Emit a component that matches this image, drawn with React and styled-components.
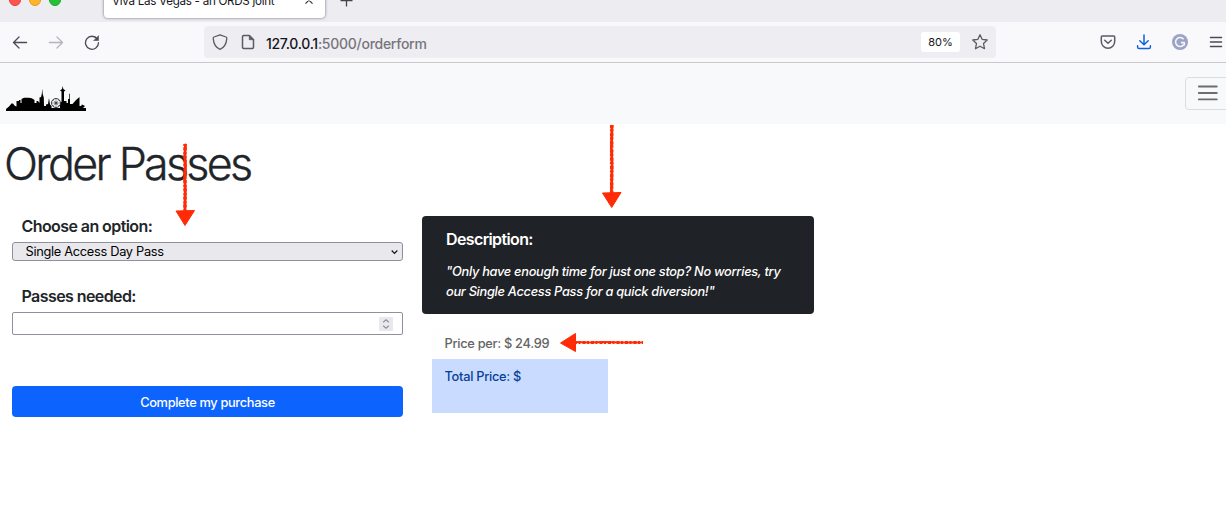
import React from 'react';
import styled, { createGlobalStyle } from 'styled-components';

const GlobalStyle = createGlobalStyle`
  *, *::before, *::after { box-sizing: border-box; }
  html, body { margin: 0; overflow: hidden; background: #fff; }
  body, button { font-family: Inter, "Liberation Sans", sans-serif; font-weight: 450; }
  svg { display: block; flex: none; }
`;

const Screen = styled.div`
  position: relative;
  width: 1226px;
  height: 522px;
  overflow: hidden;
  color: #212529;
`;

const TabStrip = styled.div`
  height: 22px;
  display: flex;
  align-items: flex-start;
  background: #edecf1;
`;
const TrafficLights = styled.div`
  display: flex;
  gap: 8px;
  width: 104px;
  padding-left: 9px;
  margin-top: -6px;
`;
const Light = styled.span`
  width: 12px;
  height: 12px;
  border-radius: 50%;
  background: ${(p) => p.$fill};
  border: 0.5px solid ${(p) => p.$edge};
`;
const Tab = styled.div`
  display: flex;
  justify-content: space-between;
  width: 221px;
  height: 30px;
  margin-top: -12px;
  padding: 4px 11px 0 8px;
  border-radius: 4px;
  background: #fff;
  box-shadow: 0 0 3px rgba(60, 58, 85, 0.75);
`;
const TabTitle = styled.span`
  font-size: 11.6px;
  font-weight: 400;
  line-height: 19px;
  letter-spacing: -0.27px;
  color: #15141a;
  white-space: nowrap;
`;

const Toolbar = styled.div`
  height: 41px;
  display: flex;
  align-items: center;
  background: #f9f9fb;
  border-bottom: 1px solid #c9c9cc;
`;
const NavButtons = styled.div`
  display: flex;
  gap: 20px;
  width: 204px;
  padding-left: 12px;
`;
const AddressBar = styled.div`
  display: flex;
  align-items: center;
  width: 792px;
  height: 32px;
  padding: 0 8px 0 8px;
  border-radius: 4px;
  background: #eeedf2;
`;
const AddressIcons = styled.div`
  display: flex;
  gap: 12px;
`;
const Url = styled.span`
  flex: 1;
  margin-left: 10px;
  padding-top: 3px;
  font-size: 14px;
  line-height: 20px;
  letter-spacing: -0.27px;
  color: #76757c;
`;
const Host = styled.span`
  color: #15141a;
  letter-spacing: -0.3px;
`;
const ZoomBadge = styled.span`
  width: 39px;
  height: 20px;
  margin-right: 12px;
  border-radius: 3px;
  background: #fff;
  font-size: 11px;
  font-weight: 400;
  line-height: 20px;
  text-align: center;
  color: #15141a;
`;
const Extensions = styled.div`
  display: flex;
  gap: 20px;
  margin-left: 104px;
`;

const Navbar = styled.nav`
  height: 61px;
  display: flex;
  align-items: center;
  justify-content: space-between;
  padding-left: 6px;
  background: #f8f9fa;
`;
const Brand = styled.div`
  padding-top: 10px;
`;
const MenuToggle = styled.button`
  display: flex;
  align-items: center;
  width: 46px;
  height: 33px;
  margin: 0 -5px 0 0;
  padding: 0 0 1px 10px;
  border: 1px solid #dcdddf;
  border-radius: 4px;
  background: transparent;
`;

const Title = styled.h1`
  margin: 16px 0 0 4px;
  font-size: 44.8px;
  line-height: 49px;
  font-weight: 300;
  -webkit-text-stroke: 0.35px #212529;
  letter-spacing: -2.72px;
`;
const Columns = styled.main`
  display: flex;
  gap: 19px;
  padding: 27px 12px 0;
`;
const OrderForm = styled.div`
  display: flex;
  flex-direction: column;
  width: 391px;
`;
const Label = styled.label`
  margin-left: 9.5px;
  font-size: 16px;
  line-height: 20px;
  font-weight: 600;
  letter-spacing: -0.58px;
`;
const SelectBox = styled.div`
  display: flex;
  align-items: center;
  justify-content: space-between;
  height: 19px;
  margin: 6px 0 25px;
  padding: 0 4px 0 12.5px;
  border: 1px solid #8f8f9d;
  border-radius: 3px;
  background: #e9e9ed;
  font-size: 12.8px;
  font-weight: 400;
  line-height: 17px;
  letter-spacing: -0.3px;
  color: #000;
`;
const NumberBox = styled.div`
  display: flex;
  align-items: center;
  justify-content: flex-end;
  height: 23px;
  margin: 6px 0 51px;
  padding-right: 9px;
  border: 1px solid #8f8f9d;
  border-radius: 2px;
  background: #fff;
`;
const Spinner = styled.span`
  display: flex;
  align-items: center;
  justify-content: center;
  width: 14px;
  height: 14px;
  background: #e9e9ed;
`;
const SubmitButton = styled.button`
  height: 31px;
  padding: 2px 0 0;
  border: 0;
  border-radius: 4px;
  background: #0d63fd;
  font-size: 12.8px;
  line-height: 20px;
  letter-spacing: -0.33px;
  color: #fff;
`;

const Details = styled.div`
  width: 392px;
`;
const DescriptionCard = styled.section`
  height: 98px;
  padding: 13px 24px 0;
  border-radius: 4px;
  background: #1f2226;
  color: #fff;
`;
const CardTitle = styled.h2`
  margin: 0 0 13px;
  font-size: 16px;
  line-height: 20px;
  font-weight: 600;
  letter-spacing: -0.62px;
`;
const CardText = styled.p`
  margin: 0;
  font-size: 12.8px;
  font-weight: 500;
  line-height: 20px;
  font-style: italic;
  white-space: nowrap;
  letter-spacing: -0.29px;
`;
const PriceList = styled.div`
  width: 176px;
  margin: 13px 0 0 10px;
`;
const PriceRow = styled.div`
  height: ${(p) => (p.$total ? 54 : 32)}px;
  padding: ${(p) => (p.$total ? 8 : 7)}px 12.5px 0;
  background: ${(p) => (p.$total ? '#c9dcff' : '#fefefe')};
  color: ${(p) => (p.$total ? '#083f98' : '#636464')};
  font-size: 12.8px;
  line-height: 20px;
  letter-spacing: -0.28px;
  white-space: nowrap;
`;
const Annotations = styled.svg`
  position: absolute;
  inset: 0;
  pointer-events: none;
`;

const Icon = ({ size = 16, color = '#5b5b66', width = 1.3, children }) => (
  <svg width={size} height={size} viewBox="0 0 16 16" fill="none" stroke={color}
    strokeWidth={width} strokeLinecap="round" strokeLinejoin="round">
    {children}
  </svg>
);

const Skyline = () => (
  <svg width="80" height="26" viewBox="0 0 80 26">
    <path d="M0 25V23L3 20.500L5.500 17.500L7 17.500L9 20L10.500 20.500V15H13V14H14.500V17H15.500V13L18 11.800H22L25 12L27 13L28.500 14V17H30.500V15L32 15L33.500 17V11.500L35 11L35.800 8L36.200 2.500L36.700 8L37.800 11.500L38 20H40V18.500L42 18L43 12L44 18.500L45.500 20V22H54V16.500L55.500 16V5.500L54 4.500L56 3L56.700 0L57.300 3L59.500 4.500L58 5.500V15H60.500V17H62V13H63.300V8L64 7.500V18H66.500L70 14L73.500 11V20H75L76 18.500L79 20L77 22H80V25Z" fill="#000" />
    <circle cx="50" cy="17" r="4.500" fill="#f8f9fa" stroke="#222" strokeWidth="0.900" />
    <circle cx="50" cy="17" r="1.500" fill="#333" />
    <path d="M50 12.500V21.500M45.500 17H54.500M46.800 13.800L53.200 20.200M53.200 13.800L46.800 20.200" stroke="#555" strokeWidth="0.500" />
  </svg>
);

const Arrows = () => (
  <Annotations width="1226" height="522" viewBox="0 0 1226 522" fill="#ff2b06" stroke="#ff2b06">
    <path d="M185.500 145L184.800 156L185.500 166L184.800 178L185.300 190L184.900 210" fill="none" strokeWidth="2.800" strokeLinecap="round" />
    <path d="M185 144V212" fill="none" strokeWidth="3.400" strokeDasharray="2 1.200 3 2" />
    <path d="M176 211L194.500 210.500L185 225.500Z" strokeWidth="1" strokeLinejoin="round" />
    <path d="M612 125L611.400 148L612 165L611.400 193" fill="none" strokeWidth="2.800" />
    <path d="M611.700 125V194" fill="none" strokeWidth="3.500" strokeDasharray="3 1.200 2 2" />
    <path d="M602.500 193L621 192.500L611.700 207.500Z" strokeWidth="1" strokeLinejoin="round" />
    <path d="M574 342L590 342.600L605 342L620 342.600L643 342.400" fill="none" strokeWidth="2" />
    <path d="M574 342.400H643" fill="none" strokeWidth="3" strokeDasharray="3 1.500 2 2" />
    <path d="M560.500 343L575.500 333.500V351.500Z" strokeWidth="1" strokeLinejoin="round" />
  </Annotations>
);

export default function App() {
  return (
    <Screen>
      <GlobalStyle />
      <TabStrip>
        <TrafficLights>
          <Light $fill="#ff5450" $edge="#e8403c" />
          <Light $fill="#ffb429" $edge="#e39c1c" />
          <Light $fill="#24c138" $edge="#18a82a" />
        </TrafficLights>
        <Tab>
          <TabTitle>Viva Las Vegas - an ORDS joint</TabTitle>
          <svg width="10" height="18" viewBox="0 0 10 18" fill="none" stroke="#33323a" strokeWidth="1.200">
            <path d="M1.500 4.500L8.500 11.700M8.500 4.500L1.500 11.700" />
          </svg>
        </Tab>
        <svg width="40" height="12" viewBox="0 0 40 12" fill="none" stroke="#45444e" strokeWidth="1.300">
          <path d="M15.500 0.600H27.500M21.500 -5V6.500" />
        </svg>
      </TabStrip>

      <Toolbar>
        <NavButtons>
          <Icon color="#4c4b55"><path d="M14.600 8.500H1.500M7 3L1.500 8.500L7 14" /></Icon>
          <Icon color="#b5b4bb"><path d="M1.400 8.500H14.500M9 3L14.500 8.500L9 14" /></Icon>
          <Icon color="#4c4b55">
            <path d="M13.300 5A6.500 6.500 0 1 0 14.500 8.700" />
            <path d="M14.500 2V6.500H10Z" fill="#4c4b55" strokeWidth="0.600" />
          </Icon>
        </NavButtons>
        <AddressBar>
          <AddressIcons>
            <Icon><path d="M8 0.800L14 3C14.700 3.300 14.900 3.700 14.800 4.400C14.400 9.500 12.800 13.500 8 15.300C3.200 13.500 1.600 9.500 1.200 4.400C1.100 3.700 1.300 3.300 2 3Z" /></Icon>
            <Icon width={1.500}>
              <path d="M3.700 1.500H9.300L13.500 5.700V13.300Q13.500 14.500 12.300 14.500H3.700Q2.500 14.500 2.500 13.300V2.700Q2.500 1.500 3.700 1.500Z" />
              <path d="M9.300 1.500V5.700H13.500Z" fill="#5b5b66" strokeWidth="0.800" />
            </Icon>
          </AddressIcons>
          <Url><Host>127.0.0.1</Host>:5000/orderform</Url>
          <ZoomBadge>80%</ZoomBadge>
          <Icon><path d="M8 0.800L10.100 5.300L15.200 6L11.500 9.500L12.500 14.700L8 12.200L3.500 14.700L4.500 9.500L0.800 6L5.900 5.300Z" /></Icon>
        </AddressBar>
        <Extensions>
          <Icon width={1.500}>
            <path d="M2.200 2H13.800Q14.700 2 14.700 3V7.500A6.700 6.700 0 0 1 1.300 7.500V3Q1.300 2 2.200 2Z" />
            <path d="M4.700 6.200L8 9.300L11.300 6.200" />
          </Icon>
          <Icon color="#1061dd" width={1.500}><path d="M8 1V10.500M3.800 6.800L8 10.800L12.200 6.800M1.600 11.700V13Q1.600 14.600 3.200 14.600H12.800Q14.400 14.600 14.400 13V11.700" /></Icon>
          <Icon color="#f5f5fa" width={1.600}>
            <circle cx="8" cy="8" r="8" fill="#9ca3c4" stroke="none" />
            <path d="M11.600 5.200A4.500 4.500 0 1 0 11.700 10.700M9 8.600H12.300V11.500" strokeLinecap="butt" />
          </Icon>
          <Icon color="#4c4b55"><path d="M2.400 3.500H13.600M2.400 8H13.600M2.400 12.500H13.600" /></Icon>
        </Extensions>
      </Toolbar>

      <Navbar>
        <Brand><Skyline /></Brand>
        <MenuToggle aria-label="Menu">
          <svg width="24" height="24" viewBox="0 0 24 24" stroke="#6c6d6e" strokeWidth="1.800" strokeLinecap="round">
            <path d="M2.800 5.500H20.800M2.800 12H20.800M2.800 18.400H20.800" />
          </svg>
        </MenuToggle>
      </Navbar>

      <Title>Order Passes</Title>
      <Columns>
        <OrderForm>
          <Label>Choose an option:</Label>
          <SelectBox>
            Single Access Day Pass
            <svg width="7" height="6" viewBox="0 0 7 6" fill="none" stroke="#111" strokeWidth="1.200">
              <path d="M0.700 1.500L3.500 4.300L6.300 1.500" />
            </svg>
          </SelectBox>
          <Label>Passes needed:</Label>
          <NumberBox>
            <Spinner>
              <svg width="8" height="12" viewBox="0 0 8 12" fill="none" stroke="#8f8f9d" strokeWidth="1.200">
                <path d="M1.200 4.200L4 1.700L6.800 4.200M1.200 7.800L4 10.300L6.800 7.800" />
              </svg>
            </Spinner>
          </NumberBox>
          <SubmitButton>Complete my purchase</SubmitButton>
        </OrderForm>
        <Details>
          <DescriptionCard>
            <CardTitle>Description:</CardTitle>
            <CardText>"Only have enough time for just one stop? No worries, try</CardText>
            <CardText>our Single Access Pass for a quick diversion!"</CardText>
          </DescriptionCard>
          <PriceList>
            <PriceRow>Price per: $ 24.99</PriceRow>
            <PriceRow $total>Total Price: $</PriceRow>
          </PriceList>
        </Details>
      </Columns>
      <Arrows />
    </Screen>
  );
}
